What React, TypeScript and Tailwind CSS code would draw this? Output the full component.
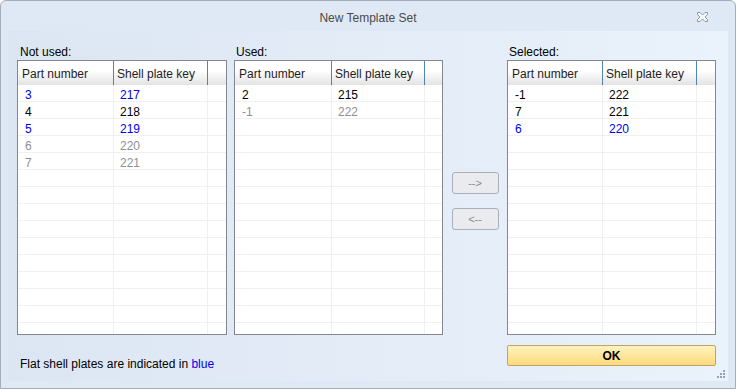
import React from 'react';

type Row = { part: string; key: string; tone: 'blue' | 'black' | 'gray' };

const notUsed: Row[] = [
  { part: '3', key: '217', tone: 'blue' },
  { part: '4', key: '218', tone: 'black' },
  { part: '5', key: '219', tone: 'blue' },
  { part: '6', key: '220', tone: 'gray' },
  { part: '7', key: '221', tone: 'gray' },
];

const used: Row[] = [
  { part: '2', key: '215', tone: 'black' },
  { part: '-1', key: '222', tone: 'gray' },
];

const selected: Row[] = [
  { part: '-1', key: '222', tone: 'black' },
  { part: '7', key: '221', tone: 'black' },
  { part: '6', key: '220', tone: 'blue' },
];

const toneClass = {
  blue: 'text-[#0000ee]',
  black: 'text-black',
  gray: 'text-[#8f8f8f]',
};

const ROWS = 15;

function Grid({ rows, c1, c2 }: { rows: Row[]; c1: string; c2: string }) {
  const filled = Array.from({ length: ROWS }, (_, i) => rows[i]);
  return (
    <div className="h-[275px] border border-[#828790] bg-white overflow-hidden">
      {/* header */}
      <div className="flex h-[24px] bg-gradient-to-b from-white from-40% to-[#e3e3e3] text-[12px] text-[#1e1e1e]">
        <div className={`${c1} flex items-center pt-[2px] pl-[4px] border-r border-[#4f83bb]`}>Part number</div>
        <div className={`${c2} flex items-center pt-[2px] pl-[3px] border-r border-[#4f83bb]`}>Shell plate key</div>
        <div className="flex-1 mr-[2px]" />
      </div>
      {filled.map((r, i) => (
        <div key={i} className="flex h-[17px] border-b border-[#f0f0f0] text-[12px] leading-[14px]">
          <div className={`${c1} pt-[3px] pl-[7px] border-r border-[#efefef] ${r ? toneClass[r.tone] : ''}`}>
            {r?.part}
          </div>
          <div className={`${c2} pt-[3px] pl-[6px] border-r border-[#efefef] ${r ? toneClass[r.tone] : ''}`}>
            {r?.key}
          </div>
          <div className="flex-1" />
        </div>
      ))}
    </div>
  );
}

function ArrowButton({ label }: { label: string }) {
  return (
    <button className="w-[47px] h-[22px] rounded-[3px] border border-[#a9b0b9] bg-[#e9ebee] text-[11px] text-[#8a8a8a] flex items-center justify-center">
      {label}
    </button>
  );
}

export default function App() {
  return (
    <div className="w-[738px] h-[392px] bg-white" style={{ fontFamily: '"Liberation Sans", Arial, sans-serif' }}>
      <div className="w-[736px] h-[389px] border border-[#a3adbb] rounded-t-[6px] bg-[#dfe9f5] flex flex-col">
        {/* title bar */}
        <div className="h-[30px] flex items-center shrink-0">
          <div className="w-[60px]" />
          <div className="flex-1 text-center text-[12px] text-[#4b4b4b] pt-[4px]">New Template Set</div>
          <div className="w-[60px] flex justify-end pr-[27px] pt-[2px]">
            <svg width="11" height="10" viewBox="0 0 11 10">
              <path d="M0.5 0.5h2.5l2.5 2.5 2.5-2.5h2.5v2l-2.5 2.5 2.5 2.5v2h-2.5l-2.5-2.5-2.5 2.5h-2.5v-2l2.5-2.5-2.5-2.5z" fill="#f4f7fb" stroke="#8d99aa" strokeWidth="1" strokeLinejoin="round" />
            </svg>
          </div>
        </div>

        {/* client area */}
        <div className="relative mx-[7px] mb-[7px] flex-1 bg-gradient-to-r from-[#dce6f3] to-[#eaf2fb] pl-[9px] pr-[12px] pt-[12px] flex text-[12px] text-black">
          <div className="w-[210px] flex flex-col">
            <div className="h-[17px] pl-[3px] pt-[2px] leading-[14px]">Not used:</div>
            <Grid rows={notUsed} c1="w-[96px]" c2="w-[94px]" />
            <div className="mt-[20px] pl-[3px]">
              Flat shell plates are indicated in <span className="text-[#0000ee]">blue</span>
            </div>
          </div>

          <div className="w-[7px]" />

          <div className="w-[209px] flex flex-col">
            <div className="h-[17px] pl-[2px] pt-[2px] leading-[14px]">Used:</div>
            <Grid rows={used} c1="w-[97px]" c2="w-[93px]" />
          </div>

          <div className="w-[64px] flex flex-col items-center pt-[129px] gap-[14px]">
            <ArrowButton label="-->" />
            <ArrowButton label="<--" />
          </div>

          <div className="w-[209px] flex flex-col">
            <div className="h-[17px] pl-[2px] pt-[2px] leading-[14px]">Selected:</div>
            <Grid rows={selected} c1="w-[95px]" c2="w-[94px]" />
            <button className="mt-[10px] h-[21px] rounded-[2px] border border-[#c2a26a] bg-gradient-to-b from-[#fff3bd] to-[#fdd97a] text-[12px] font-bold text-black">
              OK
            </button>
          </div>

          {/* resize grip */}
          <svg className="absolute right-[2px] bottom-[2px]" width="10" height="10" viewBox="0 0 10 10">
            <g fill="#8fa3bd">
              <rect x="7" y="1" width="2" height="2" />
              <rect x="4" y="4" width="2" height="2" />
              <rect x="7" y="4" width="2" height="2" />
              <rect x="1" y="7" width="2" height="2" />
              <rect x="4" y="7" width="2" height="2" />
              <rect x="7" y="7" width="2" height="2" />
            </g>
          </svg>
        </div>
      </div>
    </div>
  );
}
